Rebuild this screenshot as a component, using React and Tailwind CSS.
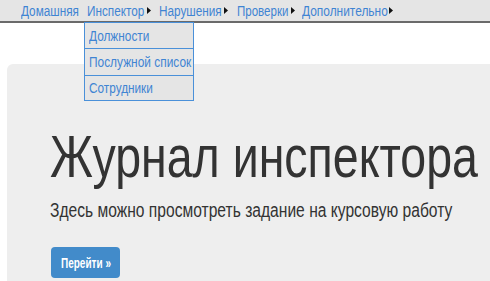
import React, { useLayoutEffect, useRef, useState } from "react";

function Fit({ target, className = "", textClass = "", children }) {
  const ref = useRef(null);
  const [s, setS] = useState(1);
  useLayoutEffect(() => {
    const measure = () => {
      if (ref.current) {
        const n = ref.current.offsetWidth;
        if (n) setS(target / n);
      }
    };
    measure();
    if (document.fonts && document.fonts.ready) document.fonts.ready.then(measure);
  }, [target]);
  return (
    <span className={"block shrink-0 " + className}>
      <span
        ref={ref}
        className={"inline-block whitespace-nowrap origin-left " + textClass}
        style={{ transform: `scaleX(${s})` }}
      >
        {children}
      </span>
    </span>
  );
}

const Tri = ({ className = "" }) => (
  <svg width="4" height="7" viewBox="0 0 4 7" className={"shrink-0 mt-[3px] " + className}>
    <path d="M0 0 L4 3.5 L0 7 Z" fill="#111" />
  </svg>
);

export default function App() {
  return (
    <div
      className="relative w-[490px] h-[281px] overflow-hidden bg-white"
      style={{ fontFamily: '"Liberation Sans", Arial, sans-serif' }}
    >
      <div className="h-[23px] bg-[#e5e5e5] border-b-2 border-[#6a6a6a] flex items-start pt-[4px] pl-[21px] text-[14px] leading-[14px] text-[#3f84d3]">
        <Fit target={58} className="w-[58px]">Домашняя</Fit>
        <Fit target={57} className="w-[57px] ml-[8px]">Инспектор</Fit>
        <Tri className="ml-[3px]" />
        <Fit target={63} className="w-[63px] ml-[8px]">Нарушения</Fit>
        <Tri className="ml-[2px]" />
        <Fit target={51} className="w-[51px] ml-[9px]">Проверки</Fit>
        <Tri className="ml-[3px]" />
        <Fit target={86} className="w-[86px] ml-[7px]">Дополнительно</Fit>
        <Tri className="ml-[1px]" />
      </div>

      <div className="absolute left-[84px] top-[22px] w-[110px] border border-[#4a90d9] bg-[#e5e5e5] text-[14px] leading-[14px] text-[#3f84d3] z-10">
        <div className="h-[26px] flex items-center pl-[4px] border-b border-[#4a90d9]">
          <Fit target={60} className="w-[60px]">Должности</Fit>
        </div>
        <div className="h-[27px] flex items-center pl-[4px] border-b border-[#4a90d9]">
          <Fit target={102} className="w-[102px]">Послужной список</Fit>
        </div>
        <div className="h-[24px] flex items-center pl-[4px]">
          <Fit target={64} className="w-[64px]">Сотрудники</Fit>
        </div>
      </div>

      <div className="mt-[41px] ml-[7px] w-[500px] h-[240px] bg-[#eeeeee] rounded-[6px] pl-[43px] pt-[63px]">
        <Fit target={428} className="w-[428px]" textClass="text-[60px] leading-[60px] text-[#333]">
          Журнал инспектора
        </Fit>
        <Fit target={402} className="w-[402px] mt-[13px]" textClass="text-[20px] leading-[20px] text-[#333]">
          Здесь можно просмотреть задание на курсовую работу
        </Fit>
        <button className="mt-[23px] ml-[1px] w-[69px] h-[31px] rounded-[4px] bg-[#428bca] text-white text-[14px] leading-[14px] font-bold flex items-center pl-[10px]">
          <Fit target={50} className="w-[50px]">Перейти »</Fit>
        </button>
      </div>
    </div>
  );
}
